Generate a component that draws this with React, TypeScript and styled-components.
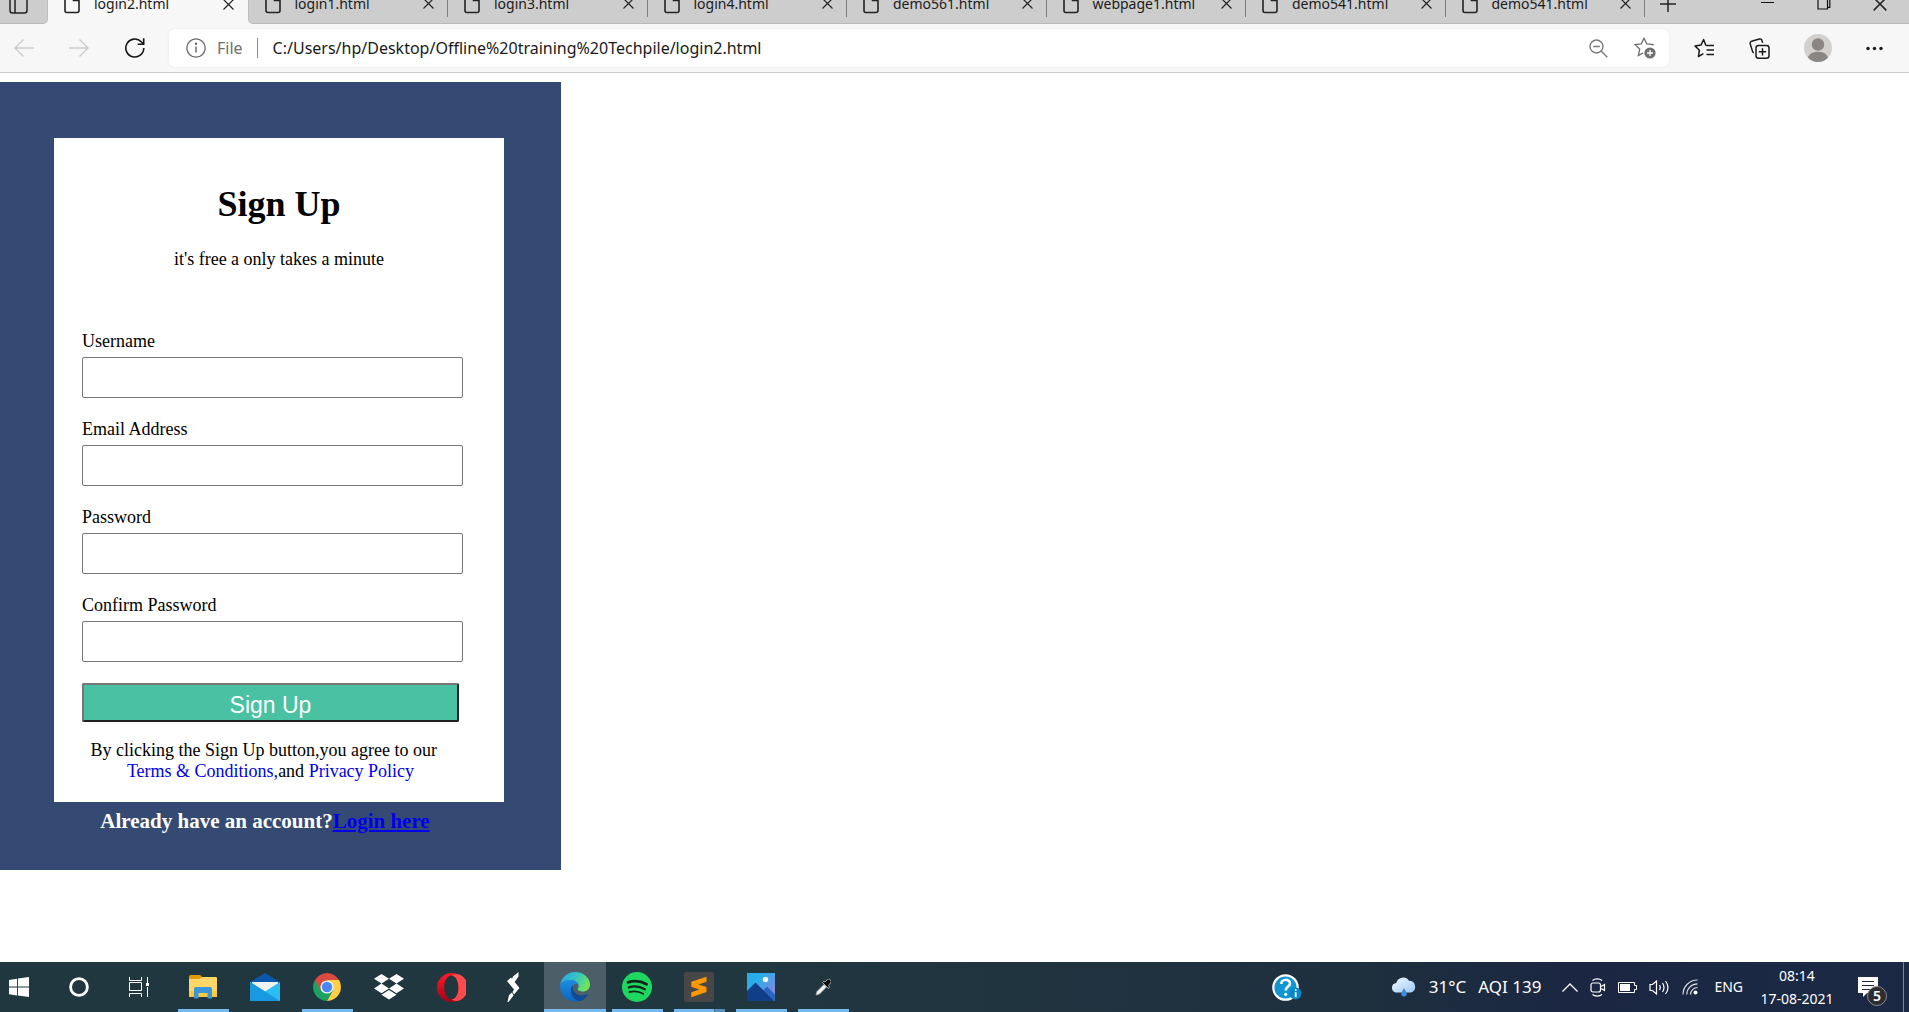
import React from "react";
import styled, { createGlobalStyle, css } from "styled-components";

const UI = `"Noto Sans", "Open Sans", sans-serif`;
const SERIF = `"Liberation Serif", "Times New Roman", serif`;
const SANS = `"Liberation Sans", Arial, sans-serif`;

const GlobalStyle = createGlobalStyle`
  *, *::before, *::after { box-sizing: border-box; }
  body { margin: 0; background: #fff; font-family: ${SERIF}; }
  button { font: inherit; color: inherit; }
  svg { display: block; flex: none; }
`;

const Screen = styled.div`
  display: flex;
  flex-direction: column;
  min-height: 100vh;
`;

/* ---------- browser chrome ---------- */

const PlainButton = styled.button`
  display: flex;
  align-items: center;
  justify-content: center;
  padding: 0;
  border: 0;
  background: none;
`;

const TabStrip = styled.div`
  display: flex;
  align-items: flex-end;
  height: 24px;
  overflow: hidden;
  background: #f7f7f7;
  font-family: ${UI};
  color: #1b1b1b;
`;

const StripEdge = styled.div`
  display: flex;
  flex: none;
  width: 48px;
  height: 38px;
  padding-left: 9px;
  align-items: center;
  background: #cdcdcd;
  border-bottom: 1px solid #b9b9b9;
  border-right: 1px solid #bdbdbd;
  border-bottom-right-radius: 5px;
`;

const Tab = styled.div<{ $active?: boolean; $first?: boolean }>`
  display: flex;
  flex: 1 1 0;
  min-width: 0;
  height: 38px;
  align-items: center;
  padding: 0 14px 2px 16px;
  background: ${(p) => (p.$active ? "#f7f7f7" : "#cdcdcd")};
  ${(p) =>
    !p.$active &&
    css`
      border-bottom: 1px solid #b9b9b9;
      background-image: linear-gradient(#7d7d7d, #7d7d7d);
      background-size: 1px 31px;
      background-position: right top;
      background-repeat: no-repeat;
    `}
  ${(p) => p.$first && "border-bottom-left-radius: 5px; border-left: 1px solid #bdbdbd;"}
`;

const TabTitle = styled.button`
  display: flex;
  flex: 1;
  min-width: 0;
  align-items: center;
  gap: 14px;
  padding: 0;
  border: 0;
  background: none;
  font-size: 14px;
  line-height: 20px;
  white-space: nowrap;
`;

const WindowControls = styled.div`
  display: flex;
  flex: none;
  width: 264px;
  height: 38px;
  align-items: center;
  padding: 0 22px 2px 14px;
  background: #cdcdcd;
  border-bottom: 1px solid #b9b9b9;
`;

const ControlGroup = styled.div`
  display: flex;
  flex: 1;
  justify-content: flex-end;
  gap: 42px;
`;

const Toolbar = styled.div`
  display: flex;
  align-items: center;
  height: 49px;
  padding: 0 26px 0 14px;
  background: #f7f7f7;
  border-bottom: 1px solid #cccccc;
  font-family: ${UI};
`;

const NavGroup = styled.div`
  display: flex;
  gap: 35px;
  margin-right: 23px;
`;

const AddressBar = styled.div`
  display: flex;
  flex: 1;
  min-width: 0;
  align-items: center;
  height: 38px;
  padding: 0 13px 0 17px;
  border-radius: 6px;
  background: #fff;
  box-shadow: 0 0 3px rgba(0, 0, 0, 0.08);
  font-size: 16px;
  line-height: 22px;
`;

const Scheme = styled.label`
  padding: 0 14px 0 11px;
  color: #6f6f6f;
  font-size: 16px;
`;

const Divider = styled.span`
  width: 1px;
  height: 20px;
  margin-right: 15px;
  background: #8a8a8a;
`;

const UrlInput = styled.input`
  flex: 1;
  min-width: 0;
  padding: 0;
  border: 0;
  outline: 0;
  background: none;
  color: #1a1a1a;
  font: 16px/22px ${UI};
`;

const AddressActions = styled.div`
  display: flex;
  align-items: center;
  gap: 26px;
`;

const ToolActions = styled.div`
  display: flex;
  align-items: center;
  gap: 34px;
  margin-left: 25px;
`;

/* ---------- page ---------- */

const Page = styled.main`
  flex: 1;
  padding: 9px 0;
`;

const Panel = styled.section`
  width: 100%;
  max-width: 561px;
  padding: 56px 57px 37px 54px;
  background: #344a72;
`;

const Card = styled.form`
  padding: 45px 41px 20px 28px;
  background: #fff;
  color: #000;
  font-size: 18px;
  line-height: 21px;
`;

const CardHeader = styled.header`
  margin: 0 -41px 61px -28px;
  text-align: center;
`;

const Title = styled.h1`
  margin: 0 0 24px;
  font-size: 36px;
  line-height: 42px;
`;

const Subtitle = styled.p`
  margin: 0;
`;

const Field = styled.div`
  display: flex;
  flex-direction: column;
  gap: 5px;
  margin-bottom: 21px;
`;

const TextInput = styled.input`
  width: 100%;
  height: 41px;
  padding: 4px 8px;
  border: 1px solid #767676;
  border-radius: 2px;
  background: #fff;
  font: 18px/21px ${SERIF};
`;

const Consent = styled.div`
  margin-right: 4px;
`;

const SubmitButton = styled.button`
  display: block;
  width: 100%;
  height: 39px;
  padding: 4px 0 0;
  border: 2px solid;
  border-color: #767676 #212121 #212121 #767676;
  border-radius: 2px;
  background: #49c1a2;
  color: #fff;
  font: 23px/28px ${SANS};
`;

const Terms = styled.p`
  margin: 18px 0 0;
  text-align: center;
  white-space: nowrap;
`;

const PlainLink = styled.a`
  color: #0000ee;
  text-decoration: none;
`;

const LoginPrompt = styled.p`
  margin: 7px 0 0;
  padding-right: 28px;
  color: #fff;
  font-size: 21px;
  font-weight: bold;
  line-height: 24px;
  text-align: center;
  white-space: nowrap;
`;

const LoginLink = styled.a`
  color: #0000ee;
  text-decoration: underline;
`;

/* ---------- taskbar ---------- */

const Taskbar = styled.footer`
  display: flex;
  align-items: stretch;
  height: 50px;
  overflow: hidden;
  background: linear-gradient(90deg, #213740 0%, #213740 40%, #1e2f3e 72%, #1b2742 82%, #1b2944 100%);
  color: #fff;
  font-family: ${UI};
`;

const SystemButton = styled(PlainButton)<{ $start?: boolean }>`
  flex: none;
  width: ${(p) => (p.$start ? "49px" : "60px")};
  ${(p) => p.$start && "justify-content: flex-start; padding-left: 9px;"}
`;

const AppList = styled.div`
  display: flex;
  flex: 1;
  margin-left: 3px;
`;

const AppButton = styled(PlainButton)<{ $open?: boolean; $active?: boolean; $stacked?: boolean }>`
  flex: none;
  width: 62px;
  background-color: ${(p) => (p.$active ? "#4c5f68" : "transparent")};
  background-repeat: no-repeat;
  background-position: center bottom;
  background-size: ${(p) => (p.$active ? "62px 3px" : "51px 3px")};
  background-image: ${(p) =>
    p.$stacked
      ? "linear-gradient(90deg, #76b9ed 0 40px, #3d6a88 40px 41px, #5990b9 41px)"
      : p.$open || p.$active
        ? "linear-gradient(#76b9ed, #76b9ed)"
        : "none"};
`;

const Tray = styled.div`
  display: flex;
  flex: none;
  align-items: center;
  font-size: 14px;
  line-height: 20px;
`;

const HelpButton = styled(PlainButton)`
  margin-right: 89px;
`;

const Weather = styled(PlainButton)`
  margin-right: 21px;
  font-size: 17px;
  line-height: 22px;
  white-space: nowrap;
`;

const Reading = styled.span`
  margin-left: 12px;
`;

const TrayIcons = styled.div`
  display: flex;
  align-items: center;
  gap: 12px;
`;

const Language = styled(PlainButton)`
  margin-left: 16px;
`;

const Clock = styled.time`
  display: flex;
  flex-direction: column;
  width: 76px;
  margin: 0 23px 0 16px;
  line-height: 23px;
  text-align: center;
  white-space: nowrap;
`;

const ActionCenter = styled(PlainButton)`
  position: relative;
`;

const Badge = styled.span`
  position: absolute;
  left: 9px;
  top: 9px;
  width: 20px;
  height: 20px;
  border: 1px solid #87898c;
  border-radius: 50%;
  background: #2b2d31;
  font-size: 14px;
  font-weight: 600;
  line-height: 18px;
  text-align: center;
`;

const ShowDesktop = styled(PlainButton)`
  align-self: stretch;
  width: 6px;
  margin-left: 25px;
  border-left: 1px solid #7b8495;
`;

/* ---------- drawings ---------- */

const line = { fill: "none", stroke: "currentColor", strokeWidth: 1.5 } as const;

const DocIcon = () => (
  <svg width="16" height="20" viewBox="0 0 16 20" {...line} stroke="#222" strokeWidth="1.6">
    <path d="M1 3a2 2 0 0 1 2-2h6.500l5.500 5.500V16.500a2 2 0 0 1-2 2H3a2 2 0 0 1-2-2zM9.500 1v5.500H15" />
  </svg>
);
const CrossIcon = ({ size = 11 }: { size?: number }) => (
  <svg width={size} height={size} viewBox="0 0 11 11" {...line} stroke="#222" strokeWidth="1.2">
    <path d="M.5.5l10 10M10.500.5l-10 10" />
  </svg>
);
const VerticalTabsIcon = () => (
  <svg width="20" height="19" viewBox="0 0 20 19" {...line} stroke="#222">
    <rect x="1" y="1" width="17" height="17" rx="2.500" />
    <path d="M6 4v14M1 4h17" />
  </svg>
);
const PlusIcon = () => (
  <svg width="18" height="18" viewBox="0 0 18 18" {...line} stroke="#222">
    <path d="M9 1v16M1 9h16" />
  </svg>
);
const MinimizeIcon = () => (
  <svg width="14" height="14" viewBox="0 0 14 14" {...line} stroke="#111" strokeWidth="1">
    <path d="M0 5.500h13" />
  </svg>
);
const RestoreIcon = () => (
  <svg width="14" height="14" viewBox="0 0 14 14" {...line} stroke="#111" strokeWidth="1.2">
    <path d="M1 2.500h9.500V12H1zM3 2.500V.6h9.800v9.800h-2.300" />
  </svg>
);
const ArrowIcon = ({ forward }: { forward?: boolean }) => (
  <svg width="20" height="20" viewBox="0 0 20 20" {...line} stroke="#cbcbcb" strokeWidth="1.4">
    <path d={forward ? "M0 10h19M10.500 1.500L19 10l-8.500 8.500" : "M20 10H1M9.500 1.500L1 10l8.500 8.500"} />
  </svg>
);
const ReloadIcon = () => (
  <svg width="22" height="22" viewBox="0 0 22 22" {...line} stroke="#151515" strokeWidth="1.6">
    <path d="M19.800 11a9 9 0 1 1-2.500-6.200l2 2.200M19.700 1.200v6h-6" />
  </svg>
);
const InfoIcon = () => (
  <svg width="20" height="20" viewBox="0 0 20 20" {...line} stroke="#6b6b6b" strokeWidth="1.300">
    <circle cx="10" cy="10" r="9.200" />
    <path d="M10 8.500v6" strokeWidth="1.500" />
    <circle cx="10" cy="5.800" r=".6" fill="#6b6b6b" />
  </svg>
);
const ZoomOutIcon = () => (
  <svg width="19" height="19" viewBox="0 0 19 19" {...line} stroke="#7a7a7a" strokeWidth="1.400">
    <circle cx="7.500" cy="7.500" r="6.500" />
    <path d="M12.300 12.300l6 6M4.200 7.500h6.600" />
  </svg>
);
const StarPlusIcon = () => (
  <svg width="22" height="22" viewBox="0 0 22 22" {...line} stroke="#707070" strokeWidth="1.300">
    <path d="M18.500 8.500l.6-.9-6.300-.7L10 1.200 7.300 6.900 1 7.600l4.700 4.300-1.300 6.600 4.800-2.600" />
    <circle cx="16" cy="16" r="5.600" fill="#707070" stroke="none" />
    <path d="M16 13v6M13 16h6" stroke="#fff" />
  </svg>
);
const FavoritesIcon = () => (
  <svg width="21" height="21" viewBox="0 0 21 21" {...line} stroke="#1b1b1b" strokeLinejoin="round">
    <path d="M12 7.300h-.2L9.600 1.500 7 7.100l-6 .8 4.400 4.300-1 6.300 5-2.800M12.200 7.600H20M12.500 12H20M12.500 16.500H20" />
  </svg>
);
const CollectionsIcon = () => (
  <svg width="21" height="21" viewBox="0 0 21 21" {...line} stroke="#1b1b1b">
    <rect x="7" y="7.500" width="13" height="12.700" rx="2.500" />
    <path d="M13.500 10.200v7.300M9.800 13.800h7.300M13.700 4.800l-.8-2.300A2 2 0 0 0 10.400 1L2.600 3.300A2 2 0 0 0 1.200 5.800l2.300 7.600a2 2 0 0 0 1.400 1.400" />
  </svg>
);
const AvatarIcon = () => (
  <svg width="28" height="28" viewBox="0 0 28 28">
    <circle cx="14" cy="14" r="14" fill="#d3d1ce" />
    <circle cx="14" cy="10.500" r="6.200" fill="#8b8683" />
    <path d="M4 23.800c1-4 5-6 10-6s9 2 10 6A14 14 0 0 1 14 28a14 14 0 0 1-10-4.200z" fill="#8b8683" />
  </svg>
);
const DotsIcon = () => (
  <svg width="17" height="5" viewBox="0 0 17 5" fill="#1b1b1b">
    <circle cx="2" cy="2.500" r="1.700" />
    <circle cx="8.500" cy="2.500" r="1.700" />
    <circle cx="15" cy="2.500" r="1.700" />
  </svg>
);

const WindowsIcon = () => (
  <svg width="20" height="20" viewBox="0 0 20 20" fill="#fff">
    <path d="M0 2.900l8.100-1.200v7.900H0zM9 1.500L20 0v9.600H9zM0 10.500h8.100v7.900L0 17.200zM9 10.500h11V20L9 18.500z" />
  </svg>
);
const CortanaIcon = () => (
  <svg width="20" height="20" viewBox="0 0 20 20">
    <circle cx="10" cy="10" r="8.400" fill="none" stroke="#fff" strokeWidth="2.800" />
  </svg>
);
const TaskViewIcon = () => (
  <svg width="20" height="20" viewBox="0 0 20 20" {...line} stroke="#fff" strokeWidth="1">
    <path d="M.5 0v3.500h12V0M.5 5.500h12v8H.5zM.5 20v-3.500h12V20M18.500 0v6M18.500 10v10" />
    <rect x="17" y="6" width="3" height="3" fill="#fff" stroke="none" />
  </svg>
);
const ExplorerIcon = () => (
  <svg width="28" height="24" viewBox="0 0 28 24">
    <path d="M0 1.500Q0 0 1.500 0h9.700l1.900 2-2 3H0z" fill="#e19c05" />
    <path d="M0 4h10.500l2.500-2H27q1 0 1 1v19H0z" fill="#ffd667" />
    <path d="M0 16h28v6H0z" fill="#fbc93c" />
    <path d="M5 23.500V14q0-2 2-2h14q2 0 2 2v9.500h-4.500V18h-9v5.500z" fill="#3c96dc" />
  </svg>
);
const MailIcon = () => (
  <svg width="30" height="28" viewBox="0 0 30 28">
    <path d="M0 9L15 0l15 9v4H0z" fill="#0b58aa" />
    <path d="M2 9h26v6L15 20 2 15z" fill="#f1f1f1" />
    <path d="M0 9l15 9.500L30 9v19H0z" fill="#2cbdf3" />
    <path d="M0 9l30 19H0z" fill="#1899e2" />
  </svg>
);
const ChromeIcon = () => (
  <svg width="28" height="28" viewBox="0 0 28 28">
    <path d="M14 14h-6L1.900 7a14 14 0 0 0 12.100 21l6-10z" fill="#1da261" />
    <path d="M14 7h12.100A14 14 0 0 1 14 28l6-10.500z" fill="#fdcf46" />
    <path d="M1.900 7L8 17.500 14 14l0-7h12.100A14 14 0 0 0 1.900 7z" fill="#db4a3e" />
    <circle cx="14" cy="14" r="6.600" fill="#f3f3f3" />
    <circle cx="14" cy="14" r="5.200" fill="#4b87f0" />
  </svg>
);
const DropboxIcon = () => (
  <svg width="30" height="26" viewBox="0 0 30 26" fill="#fff">
    <path d="M7.500 0L15 4.800 7.500 9.600 0 4.800zM22.500 0L30 4.800l-7.500 4.800L15 4.800zM7.500 9.600L15 14.400l-7.500 4.800L0 14.400zM22.500 9.600l7.500 4.800-7.500 4.800-7.500-4.800zM7.500 20.700L15 16l7.500 4.700L15 25.500z" />
  </svg>
);
const OperaIcon = () => (
  <svg width="29" height="29" viewBox="0 0 29 29">
    <defs>
      <linearGradient id="opera" x1="0" y1="0" x2="0" y2="1">
        <stop offset="0" stopColor="#ff1b2d" />
        <stop offset="1" stopColor="#a70014" />
      </linearGradient>
    </defs>
    <path d="M14.500 0a14.500 14.500 0 1 0 0 29 14.500 14.500 0 0 0 0-29zm0 2.500c4 0 7 5.200 7 12s-3 12-7 12-7.300-5.200-7.300-12 3.300-12 7.300-12z" fill="url(#opera)" fillRule="evenodd" />
    <path d="M14.500 2.500a9 9 0 0 1 9-0.600 14.500 14.500 0 0 1 0 25.200 9 9 0 0 1-9-.6c4 0 7-5.200 7-12s-3-12-7-12z" fill="#ff4b4b" />
  </svg>
);
const BoltIcon = () => (
  <svg width="14" height="30" viewBox="0 0 14 30" fill="#fff">
    <path d="M12.500 0v4.500L6.500 13 5 9.500 7 4.500zM1 9l4-3.500L13.500 16 8 22.500 6.500 20 8 17.500zM1.500 30L3 23l3-2.500 1.500 3L2.500 30z" />
  </svg>
);
const EdgeIcon = () => (
  <svg width="30" height="30" viewBox="0 0 30 30">
    <defs>
      <linearGradient id="edgeTop" x1="0" y1="0" x2="1" y2=".4">
        <stop offset="0" stopColor="#2aa5e8" />
        <stop offset=".55" stopColor="#34c3c5" />
        <stop offset="1" stopColor="#6ce55d" />
      </linearGradient>
      <linearGradient id="edgeSide" x1="0" y1="0" x2="0" y2="1">
        <stop offset="0" stopColor="#1e8ce0" />
        <stop offset="1" stopColor="#0a66c4" />
      </linearGradient>
    </defs>
    <path d="M.2 13A15 15 0 0 1 15 0c9 0 15 6.500 15 12.500 0 4.500-3.500 7-7 7-3.500 0-5.200-1.300-5.200-2.300 0-.7.900-1.200.9-3.200 0-3-3.200-5.700-7.700-5.700C6 8.300 1.500 10 .2 13z" fill="url(#edgeTop)" />
    <path d="M.1 13.500C1 10 5 8 9.500 8c5 0 8.800 2.500 9.200 6-.7-1.500-2-2-3.200-2-2.500 0-4.500 3-4.500 6.500C11 23.500 15 28 20 28.700A15 15 0 0 1 .1 13.500z" fill="url(#edgeSide)" />
    <path d="M12.500 13.500c-1 1-1.500 3-1.500 5C11 24 15 29 20.500 28.900c3.300-1.200 5.600-3.500 7-6 .3-.7-.3-.9-.8-.6-5.700 2.700-14.200.7-14.200-8.800z" fill="#104a91" />
  </svg>
);
const SpotifyIcon = () => (
  <svg width="30" height="30" viewBox="0 0 30 30" fill="none" stroke="#10231a" strokeLinecap="round">
    <circle cx="15" cy="15" r="15" fill="#1ed760" stroke="none" />
    <path d="M6 10.300c6-1.800 13-1.200 18.500 1.900" strokeWidth="2.800" />
    <path d="M6.800 15.300c5-1.500 11.200-.9 16 1.900" strokeWidth="2.300" />
    <path d="M7.500 20c4.500-1.100 9.500-.7 13.700 1.800" strokeWidth="1.900" />
  </svg>
);
const SublimeIcon = () => (
  <svg width="30" height="30" viewBox="0 0 30 30">
    <rect width="30" height="30" rx="2" fill="#474747" />
    <path d="M22.500 4.800v5L14.500 12.600l8 2.400v5L7.300 25.200v-5l8-2.700-8-2.700v-5z" fill="#ff9800" />
  </svg>
);
const PhotosIcon = () => (
  <svg width="28" height="28" viewBox="0 0 28 28">
    <defs>
      <linearGradient id="sky" x1="0" y1="0" x2="1" y2="1">
        <stop offset="0.300" stopColor="#27aeea" />
        <stop offset="1" stopColor="#a478dd" />
      </linearGradient>
    </defs>
    <rect width="28" height="28" fill="url(#sky)" />
    <path d="M12 28l-3-3 11-11.500 8 8V28z" fill="#2767be" />
    <path d="M0 28V18l8.500-8.500L27 28z" fill="#103f88" />
    <circle cx="18.500" cy="6.500" r="2.700" fill="#f4f6fb" />
  </svg>
);
const PickerIcon = () => (
  <svg width="16" height="17" viewBox="0 0 16 17">
    <path d="M1 16l1-3.500 7-7 2.500 2.500-7 7z" fill="#f4f4f4" stroke="#aaa" strokeWidth=".8" />
    <path d="M7.500 3.500l6 6 1-1.500-1-1.500 2-2.500a2.300 2.300 0 0 0-3.200-3.300L10 3 8.800 2.200z" fill="#0c0c0c" stroke="#c4c4c4" strokeWidth=".8" />
  </svg>
);
const HelpIcon = () => (
  <svg width="30" height="27" viewBox="0 0 30 27" fill="none">
    <circle cx="13.500" cy="13.500" r="12.200" fill="#1296d2" stroke="#fff" strokeWidth="2.200" />
    <path d="M9.300 10c0-5.500 8.700-5.300 8.700-.6 0 3.200-4.300 3.200-4.300 7.100" stroke="#fff" strokeWidth="2.500" />
    <circle cx="13.700" cy="20.300" r="1.600" fill="#fff" />
    <circle cx="23.500" cy="19.500" r="6" fill="#0787c5" />
    <path d="M23.700 18.200v5" stroke="#fff" strokeWidth="1.800" />
    <circle cx="23.700" cy="15.900" r="1" fill="#fff" />
  </svg>
);
const CloudIcon = () => (
  <svg width="26" height="20" viewBox="0 0 26 20">
    <defs>
      <linearGradient id="cloud" x1="0" y1="0" x2="1" y2="1">
        <stop offset="0" stopColor="#f4faff" />
        <stop offset="1" stopColor="#9cc8f7" />
      </linearGradient>
    </defs>
    <path d="M4.500 15.500a4.800 4.800 0 0 1 .8-9.400A7 7 0 0 1 18 3.800a6 6 0 0 1 2 11.700z" fill="url(#cloud)" />
    <path d="M13 11c1.300 2.500 2.700 4 2.700 5.800a2.700 2.700 0 0 1-5.400 0c0-1.800 1.400-3.300 2.700-5.800z" fill="#3f8ae6" />
  </svg>
);
const ChevronIcon = () => (
  <svg width="16" height="9" viewBox="0 0 16 9" {...line} stroke="#fff" strokeWidth="1.300">
    <path d="M.5 8.500L8 1l7.500 7.500" />
  </svg>
);
const MeetIcon = () => (
  <svg width="16" height="19" viewBox="0 0 16 19" {...line} stroke="#fff" strokeWidth="1.200">
    <rect x="1" y="5" width="9.500" height="9" rx="2" />
    <path d="M11 8.500l3.500-2v6l-3.500-2M2.500 2.500C5 .4 9.500.4 12 2.500M2.500 16.500c2.500 2.100 7 2.100 9.500 0" />
  </svg>
);
const BatteryIcon = () => (
  <svg width="19" height="11" viewBox="0 0 19 11" {...line} stroke="#fff" strokeWidth="1">
    <path d="M.5.5h16v3h2v4h-2v3H.5z" />
    <rect x="2" y="2" width="10" height="7" fill="#fff" stroke="none" />
  </svg>
);
const SpeakerIcon = () => (
  <svg width="21" height="17" viewBox="0 0 21 17" {...line} stroke="#fff" strokeWidth="1.200">
    <path d="M1 5.500h2.500L7.500 2v13l-4-3.500H1zM10.500 6q1.500 2.500 0 5M13.500 4q3 4.500 0 9M16.500 2q5 6.500 0 13" />
  </svg>
);
const WifiIcon = () => (
  <svg width="16" height="16" viewBox="0 0 16 16" {...line} stroke="#d8dde5" strokeWidth="1.200">
    <path d="M1 15.500A14.500 14.500 0 0 1 15.500 1M4.800 15.500A10.700 10.700 0 0 1 15.500 4.800M8.500 15.500a7 7 0 0 1 7-7" />
    <circle cx="13.500" cy="13.500" r="2" fill="#fff" stroke="none" />
  </svg>
);
const MessageIcon = () => (
  <svg width="20" height="20" viewBox="0 0 20 20">
    <path d="M0 0h20v16H9l-4 4v-4H0z" fill="#fff" />
    <path d="M4 4.500h12M4 8.500h12M4 12.500h8" stroke="#1b2944" />
  </svg>
);

/* ---------- content ---------- */

const tabs = [
  "login2.html",
  "login1.html",
  "login3.html",
  "login4.html",
  "demo561.html",
  "webpage1.html",
  "demo541.html",
  "demo541.html",
];

const fields = [
  { id: "username", label: "Username", type: "text" },
  { id: "email", label: "Email Address", type: "email" },
  { id: "password", label: "Password", type: "password" },
  { id: "confirm", label: "Confirm Password", type: "password" },
];

const apps = [
  { name: "File Explorer", Icon: ExplorerIcon, open: true },
  { name: "Mail", Icon: MailIcon },
  { name: "Chrome", Icon: ChromeIcon, open: true },
  { name: "Dropbox", Icon: DropboxIcon },
  { name: "Opera", Icon: OperaIcon },
  { name: "Shortcut", Icon: BoltIcon },
  { name: "Edge", Icon: EdgeIcon, active: true },
  { name: "Spotify", Icon: SpotifyIcon, open: true },
  { name: "Sublime Text", Icon: SublimeIcon, stacked: true },
  { name: "Photos", Icon: PhotosIcon, open: true },
  { name: "Color picker", Icon: PickerIcon, open: true },
];

function BrowserChrome() {
  return (
    <header>
      <TabStrip>
        <StripEdge>
          <PlainButton aria-label="Tab actions">
            <VerticalTabsIcon />
          </PlainButton>
        </StripEdge>
        {tabs.map((title, i) => (
          <Tab key={i} $active={i === 0} $first={i === 1}>
            <TabTitle>
              <DocIcon />
              {title}
            </TabTitle>
            <PlainButton aria-label="Close tab">
              <CrossIcon />
            </PlainButton>
          </Tab>
        ))}
        <WindowControls>
          <PlainButton aria-label="New tab">
            <PlusIcon />
          </PlainButton>
          <ControlGroup>
            <PlainButton aria-label="Minimize">
              <MinimizeIcon />
            </PlainButton>
            <PlainButton aria-label="Restore">
              <RestoreIcon />
            </PlainButton>
            <PlainButton aria-label="Close">
              <CrossIcon size={14} />
            </PlainButton>
          </ControlGroup>
        </WindowControls>
      </TabStrip>
      <Toolbar>
        <NavGroup>
          <PlainButton aria-label="Back">
            <ArrowIcon />
          </PlainButton>
          <PlainButton aria-label="Forward">
            <ArrowIcon forward />
          </PlainButton>
          <PlainButton aria-label="Refresh">
            <ReloadIcon />
          </PlainButton>
        </NavGroup>
        <AddressBar>
          <InfoIcon />
          <Scheme htmlFor="address">File</Scheme>
          <Divider />
          <UrlInput
            id="address"
            type="text"
            defaultValue="C:/Users/hp/Desktop/Offline%20training%20Techpile/login2.html"
          />
          <AddressActions>
            <PlainButton aria-label="Zoom out">
              <ZoomOutIcon />
            </PlainButton>
            <PlainButton aria-label="Add to favorites">
              <StarPlusIcon />
            </PlainButton>
          </AddressActions>
        </AddressBar>
        <ToolActions>
          <PlainButton aria-label="Favorites">
            <FavoritesIcon />
          </PlainButton>
          <PlainButton aria-label="Collections">
            <CollectionsIcon />
          </PlainButton>
          <PlainButton aria-label="Profile">
            <AvatarIcon />
          </PlainButton>
          <PlainButton aria-label="Settings and more">
            <DotsIcon />
          </PlainButton>
        </ToolActions>
      </Toolbar>
    </header>
  );
}

function SignUpPage() {
  return (
    <Page>
      <Panel>
        <Card onSubmit={(e) => e.preventDefault()}>
          <CardHeader>
            <Title>Sign Up</Title>
            <Subtitle>it's free a only takes a minute</Subtitle>
          </CardHeader>
          {fields.map((f) => (
            <Field key={f.id}>
              <label htmlFor={f.id}>{f.label}</label>
              <TextInput id={f.id} type={f.type} />
            </Field>
          ))}
          <Consent>
            <SubmitButton type="submit">Sign Up</SubmitButton>
            <Terms>
              By clicking the Sign Up button,you agree to our&nbsp;&nbsp;&nbsp;
              <br />
              <PlainLink href="#terms">Terms &amp; Conditions,</PlainLink>and{" "}
              <PlainLink href="#privacy">Privacy Policy</PlainLink>
            </Terms>
          </Consent>
        </Card>
        <LoginPrompt>
          Already have an account?<LoginLink href="#login">Login here</LoginLink>
        </LoginPrompt>
      </Panel>
    </Page>
  );
}

function SystemTaskbar() {
  return (
    <Taskbar>
      <SystemButton $start aria-label="Start">
        <WindowsIcon />
      </SystemButton>
      <SystemButton aria-label="Cortana">
        <CortanaIcon />
      </SystemButton>
      <SystemButton aria-label="Task view">
        <TaskViewIcon />
      </SystemButton>
      <AppList>
        {apps.map(({ name, Icon, open, active, stacked }) => (
          <AppButton key={name} aria-label={name} $open={open} $active={active} $stacked={stacked}>
            <Icon />
          </AppButton>
        ))}
      </AppList>
      <Tray>
        <HelpButton aria-label="Help">
          <HelpIcon />
        </HelpButton>
        <Weather>
          <CloudIcon />
          <Reading>31°C</Reading>
          <Reading>AQI 139</Reading>
        </Weather>
        <TrayIcons>
          <PlainButton aria-label="Show hidden icons">
            <ChevronIcon />
          </PlainButton>
          <PlainButton aria-label="Meet now">
            <MeetIcon />
          </PlainButton>
          <PlainButton aria-label="Battery">
            <BatteryIcon />
          </PlainButton>
          <PlainButton aria-label="Volume">
            <SpeakerIcon />
          </PlainButton>
          <PlainButton aria-label="Network">
            <WifiIcon />
          </PlainButton>
        </TrayIcons>
        <Language>ENG</Language>
        <Clock>
          <span>08:14</span>
          <span>17-08-2021</span>
        </Clock>
        <ActionCenter aria-label="Notifications">
          <MessageIcon />
          <Badge>5</Badge>
        </ActionCenter>
        <ShowDesktop aria-label="Show desktop" />
      </Tray>
    </Taskbar>
  );
}

export default function App() {
  return (
    <Screen>
      <GlobalStyle />
      <BrowserChrome />
      <SignUpPage />
      <SystemTaskbar />
    </Screen>
  );
}
